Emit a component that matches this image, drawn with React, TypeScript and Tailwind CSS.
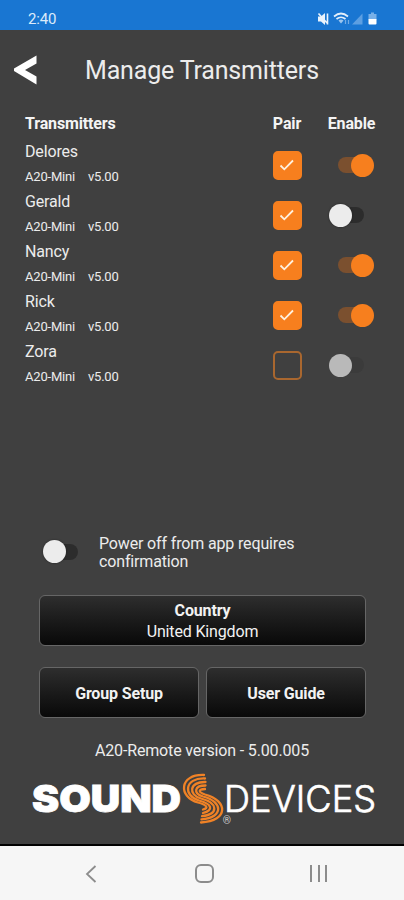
import { useState } from 'react'

type Transmitter = {
  name: string
  model: string
  version: string
  paired: boolean
  enabled: boolean
}

const initialTransmitters: Transmitter[] = [
  { name: 'Delores', model: 'A20-Mini', version: 'v5.00', paired: true, enabled: true },
  { name: 'Gerald', model: 'A20-Mini', version: 'v5.00', paired: true, enabled: false },
  { name: 'Nancy', model: 'A20-Mini', version: 'v5.00', paired: true, enabled: true },
  { name: 'Rick', model: 'A20-Mini', version: 'v5.00', paired: true, enabled: true },
  { name: 'Zora', model: 'A20-Mini', version: 'v5.00', paired: false, enabled: false },
]

const panelButton =
  'rounded-[6px] border border-[#666666] bg-linear-to-b from-[#2e2e2e] to-[#090909] text-base tracking-[-0.15px] text-[#f2f2f2]'

function StatusBar() {
  return (
    <div className="flex h-[30px] items-center justify-between bg-[#1976d2] pl-7 pr-[25px] pt-2 text-[#dcebfa]">
      <span className="text-[15px] leading-none tracking-[-0.2px]">2:40</span>
      <svg width="62" height="14" viewBox="0 0 62 14" fill="none">
        {/* muted speaker */}
        <path d="M1 4.500h3l4-3.500v12L4 9.500H1z" fill="#eaf3fc" />
        <path d="M1.500 1.500l9 10M10.500 1.500v11" stroke="#eaf3fc" strokeWidth="1.600" />
        {/* wifi */}
        <path d="M17 4.500q7-6 14 0M19.500 7q4.500-3.500 9 0" stroke="#e3effb" strokeWidth="1.700" />
        <path d="M21.500 8.500q2.500-2 5 0L24 11.500z" fill="#9cc5ee" />
        <path d="M28.500 8v4M31.500 8v4" stroke="#6faae6" strokeWidth="1.200" />
        {/* signal */}
        <path d="M35 12.500L45.500 1.500v11z" fill="#5d9fe2" />
        {/* battery */}
        <path d="M54 0.500h3v1.500h2.500v5.500h-8V2H54z" fill="#78b0e8" />
        <path d="M51.500 7h8v4.500a1 1 0 0 1-1 1h-6a1 1 0 0 1-1-1z" fill="#fff" />
      </svg>
    </div>
  )
}

function Toggle({ on, disabled, onToggle }: { on: boolean; disabled?: boolean; onToggle: () => void }) {
  return (
    <button
      onClick={onToggle}
      disabled={disabled}
      className={`flex h-6 w-[46px] items-center ${on ? 'justify-end pr-px' : 'justify-start'}`}
    >
      {on && <span className="-mr-4 h-4 w-[29px] rounded-full bg-[#7b502f]" />}
      <span
        className={`relative size-[23px] shrink-0 rounded-full ${
          on ? 'bg-[#f77f1e]' : disabled ? 'bg-[#b9b9b9]' : 'bg-[#ececec] shadow-[0_0_2px_#222]'
        }`}
      />
      {!on && <span className={`-ml-3.5 h-4 w-[26px] rounded-full ${disabled ? 'bg-[#3b3b3b]' : 'bg-[#2c2c2c]'}`} />}
    </button>
  )
}

function Checkbox({ checked, onToggle }: { checked: boolean; onToggle: () => void }) {
  return (
    <button
      onClick={onToggle}
      className={`flex size-[29px] items-center justify-center rounded-[5px] border-2 ${
        checked ? 'border-[#f77f1e] bg-[#f77f1e]' : 'border-[#a9672f]'
      }`}
    >
      {checked && (
        <svg width="16" height="14" viewBox="0 0 16 14" fill="none">
          <path d="M1.500 7.500L5.300 11.300L14 2.500" stroke="#fff1df" strokeWidth="1.800" />
        </svg>
      )}
    </button>
  )
}

function Logo() {
  return (
    <svg className="ml-7 block" width="364" height="56" viewBox="0 0 364 56" fill="none">
      <text
        x="4"
        y="42"
        fontSize="36.500"
        textLength="149"
        lengthAdjust="spacingAndGlyphs"
        strokeWidth="0.800"
        className="fill-white stroke-white font-[Inter,sans-serif] font-black"
      >
        SOUND
      </text>
      {/* nested S curves, outermost on the left ends innermost on the right */}
      <g stroke="#f08226" strokeWidth="2.300" strokeLinecap="round">
        <path d="M176 5C151 4 150 27 170 32.500C179 35 181 38 175 39.500" />
        <path d="M177 8.500C156 7.500 155 26 171 30.500C184 34 186 40 175 43" />
        <path d="M177.500 12C161 11.500 160 25 173 28.500C190 33 191 44 174 46.200" />
        <path d="M177.500 15.500C166 15.500 165 23.500 175 26.500C195 31.500 196 47.500 173.500 49.300" />
        <path d="M177 19C170 19.500 170 22 177 24.500C200 30.500 201 51 173 52.500" />
      </g>
      <text x="194.800" y="54" fontSize="10.500" className="fill-[#cfcfcf] font-[Roboto,sans-serif]">
        ®
      </text>
      <text
        x="196"
        y="42"
        fontSize="36.500"
        textLength="152"
        lengthAdjust="spacingAndGlyphs"
        strokeWidth="0.700"
        className="fill-white stroke-white font-[Inter,sans-serif] font-light"
      >
        DEVICES
      </text>
    </svg>
  )
}

function NavBar() {
  return (
    <div className="flex h-[56px] items-center justify-between border-t-2 border-black bg-[#f6f6f6] pl-[84px] pr-[77px] pt-px">
      <svg width="14" height="20" viewBox="0 0 14 20" fill="none" stroke="#8c8c8c" strokeWidth="1.800">
        <path d="M11.500 2L3 10l8.500 8" />
      </svg>
      <span className="size-[19px] rounded-[6px] border-2 border-[#8c8c8c]" />
      <span className="flex h-[17px] w-[17px] justify-between">
        <span className="w-0.5 bg-[#8c8c8c]" />
        <span className="w-0.5 bg-[#8c8c8c]" />
        <span className="w-0.5 bg-[#8c8c8c]" />
      </span>
    </div>
  )
}

export default function App() {
  const [transmitters, setTransmitters] = useState(initialTransmitters)
  const [confirmPowerOff, setConfirmPowerOff] = useState(false)

  const update = (name: string, patch: Partial<Transmitter>) => {
    setTransmitters((prev) => prev.map((item) => (item.name === name ? { ...item, ...patch } : item)))
  }

  return (
    <div className="flex h-[900px] w-[404px] flex-col overflow-hidden bg-[#404040] font-[Roboto,sans-serif] text-[#ececec]">
      <StatusBar />

      <header className="flex h-20 items-center pl-3.5">
        <svg width="24" height="30" viewBox="0 0 24 30">
          <path d="M22.500 0.500v8L11 15l11.500 6.500v8L0 16v-2.500z" fill="#fff" />
        </svg>
        <h1 className="ml-[47px] pt-0.5 text-[25px] tracking-[-0.17px]">Manage Transmitters</h1>
      </header>

      <main className="flex flex-1 flex-col">
        <div className="grid h-[30px] grid-cols-[233px_58px_71px] pl-[25px] text-base font-bold leading-[27px] tracking-[-0.15px] text-[#f4f4f4]">
          <span>Transmitters</span>
          <span className="text-center">Pair</span>
          <span className="text-center">Enable</span>
        </div>

        {transmitters.map((item) => (
          <div key={item.name} className="grid h-[50px] grid-cols-[233px_58px_71px] items-center pl-[25px]">
            <div>
              <p className="text-base leading-6 tracking-[-0.15px]">{item.name}</p>
              <p className="flex gap-[13px] text-[13px] leading-[26px] tracking-[-0.2px]">
                <span>{item.model}</span>
                <span>{item.version}</span>
              </p>
            </div>
            <div className="flex justify-center">
              <Checkbox checked={item.paired} onToggle={() => update(item.name, { paired: !item.paired })} />
            </div>
            <div className="flex justify-center">
              <Toggle
                on={item.enabled}
                disabled={!item.paired}
                onToggle={() => update(item.name, { enabled: !item.enabled })}
              />
            </div>
          </div>
        ))}

        <div className="mt-auto flex items-center pl-[43px]">
          <Toggle on={confirmPowerOff} onToggle={() => setConfirmPowerOff(!confirmPowerOff)} />
          <p className="ml-2.5 w-[210px] pt-[3px] text-base leading-[18px] tracking-[-0.15px]">
            Power off from app requires confirmation
          </p>
        </div>

        <div className="mt-6 grid grid-cols-2 gap-x-[7px] gap-y-[21px] pl-[39px] pr-[38px]">
          <button className={`${panelButton} col-span-2 h-[51px] leading-[21px]`}>
            <span className="block font-bold">Country</span>
            <span className="block">United Kingdom</span>
          </button>
          <button className={`${panelButton} h-[51px] pt-0.5 font-bold`}>Group Setup</button>
          <button className={`${panelButton} h-[51px] pt-0.5 font-bold`}>User Guide</button>
        </div>

        <p className="mt-[21px] text-center text-base leading-6 tracking-[-0.15px]">A20-Remote version - 5.00.005</p>
        <div className="mb-[18px] mt-[7px]">
          <Logo />
        </div>
      </main>

      <NavBar />
    </div>
  )
}
